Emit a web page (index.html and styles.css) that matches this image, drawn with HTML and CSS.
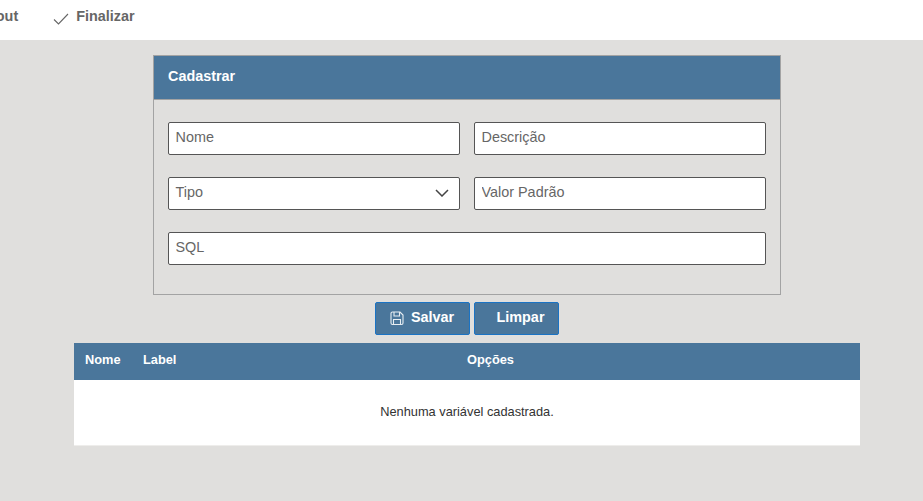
FILE: index.html
```html
<!DOCTYPE HTML>
<html>
<head>
<meta charset="utf-8">
<title>Cadastrar</title>
<link rel="stylesheet" href="styles.css">
</head>

<body>
<nav class="top_bar">
	<a class="top_link top_link_cut">Layout</a>
	<a class="top_link">
		<svg class="ic_check" width="16" height="16" viewBox="0 0 16 16"><path d="M1 9.5 L5.5 14 L15 4" fill="none" stroke="#666" stroke-width="1.1"/></svg>
		Finalizar
	</a>
</nav>

<div class="wrap">
	<section class="card">
		<div class="card_head">Cadastrar</div>
		<form class="card_form" action="#" method="post">
			<input class="field" type="text" placeholder="Nome">
			<input class="field" type="text" placeholder="Descrição">
			<div class="field field_select">
				<span>Tipo</span>
				<svg width="14" height="8" viewBox="0 0 14 8"><path d="M1 1 L7 7 L13 1" fill="none" stroke="#444" stroke-width="1.5"/></svg>
			</div>
			<input class="field" type="text" placeholder="Valor Padrão">
			<input class="field field_wide" type="text" placeholder="SQL">
		</form>
	</section>

	<div class="actions">
		<a class="btn btn_save">
			<svg width="14" height="15" viewBox="0 0 14 15"><path d="M1 2.5 a1.5 1.5 0 0 1 1.5-1.5 H10 L13 4 V12 a1.5 1.5 0 0 1-1.5 1.5 H2.5 a1.5 1.5 0 0 1-1.5-1.5 Z M4 1 V5 H9.5 V1 M3.5 13.5 V8.5 H10.5 V13.5" fill="none" stroke="#e8eef3" stroke-width="1.1"/></svg>
			Salvar
		</a>
		<a class="btn btn_clear">Limpar</a>
	</div>

	<section class="list">
		<div class="list_head">
			<span>Nome</span>
			<span>Label</span>
			<span class="list_opts">Opções</span>
		</div>
		<p class="list_empty">Nenhuma variável cadastrada.</p>
	</section>
</div>
</body>
</html>
```

FILE: styles.css
```css
* {
	box-sizing:border-box;
}
html, body {
	margin:0;
	height:100%;
	overflow:hidden;
}
body {
	background:#e0dfdd;
	font-family:"Liberation Sans", Arial, sans-serif;
	color:#333;
}
.top_bar {
	display:flex;
	align-items:center;
	gap:35px;
	height:40px;
	margin-left:-29px;
	padding-bottom:8px;
	background:#fff;
}
.top_link {
	display:flex;
	align-items:center;
	gap:7px;
	color:#666;
	font-size:14.4px;
	font-weight:700;
}
.ic_check {
	margin-top:4px;
}
.wrap {
	width:786px;
	margin-left:74px;
	padding-top:15px;
}
.card {
	width:628px;
	height:240px;
	margin:0 auto;
	border:1px solid #a3a3a3;
}
.card_head {
	height:44px;
	padding-left:14px;
	border-bottom:1px solid #a3a3a3;
	background:#4a769b;
	color:#fff;
	font-size:14.4px;
	font-weight:700;
	line-height:41px;
}
.card_form {
	display:grid;
	grid-template-columns:292px 292px;
	grid-auto-rows:33px;
	gap:22px 14px;
	padding:22px 14px 0;
}
.field {
	display:block;
	width:100%;
	height:33px;
	padding:0 6.5px 3px;
	border:1px solid #555;
	border-radius:2px;
	background:#fff;
	color:#666;
	font-family:inherit;
	font-size:14.4px;
}
.field::placeholder {
	color:#666;
	opacity:1;
}
.field_select {
	display:flex;
	align-items:center;
	justify-content:space-between;
	padding-right:10px;
}
.field_select svg {
	margin-top:1px;
}
.field_wide {
	grid-column:1 / 3;
}
.actions {
	display:flex;
	justify-content:center;
	gap:4px;
	padding-top:7px;
}
.btn {
	display:flex;
	align-items:center;
	height:33px;
	padding-bottom:3px;
	border:1px solid #1a73c4;
	border-radius:2px;
	background:#4a769b;
	color:#fff;
	font-size:14.4px;
	font-weight:700;
}
.btn_save {
	width:95px;
	gap:7px;
	padding-left:14px;
}
.btn_save svg {
	margin-top:3px;
}
.btn_clear {
	width:85px;
	padding-left:21.5px;
}
.list {
	margin-top:8px;
	border-bottom:1px solid #eeedeb;
	background:#fff;
}
.list_head {
	display:flex;
	align-items:center;
	height:37px;
	padding-left:11px;
	padding-bottom:5px;
	background:#4a769b;
	color:#fff;
	font-size:12.8px;
	font-weight:700;
}
.list_head span:first-child {
	width:58px;
}
.list_head span:nth-child(2) {
	width:324px;
}
.list_empty {
	margin:0;
	height:65px;
	color:#333;
	font-size:12.8px;
	line-height:64px;
	text-align:center;
}
```
